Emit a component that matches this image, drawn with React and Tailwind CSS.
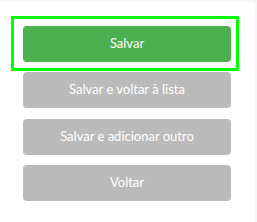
export default function App() {
  const btn = "h-9 w-[208px] rounded-[4px] flex items-center justify-center text-[13px] text-white";
  return (
    <div className="w-[257px] h-[222px] bg-[#f7f7f7] pt-[2px] overflow-hidden" style={{ fontFamily: "Lato, 'Noto Sans', sans-serif" }}>
      <div className="relative w-[255px] h-[220px] bg-white pt-[24px] pl-[23px] flex flex-col gap-[10px]">
        <button className={btn + " bg-[#4caf50]"}>Salvar</button>
        <button className={btn + " bg-[#bbbbbb]"}>Salvar e voltar à lista</button>
        <button className={btn + " bg-[#bbbbbb] mt-px"}>Salvar e adicionar outro</button>
        <button className={btn + " bg-[#bbbbbb]"}>Voltar</button>
        <div className="absolute left-[11px] top-[14px] w-[228px] h-[55px] border-[3px] border-[#00ff00] pointer-events-none" />
      </div>
    </div>
  );
}
